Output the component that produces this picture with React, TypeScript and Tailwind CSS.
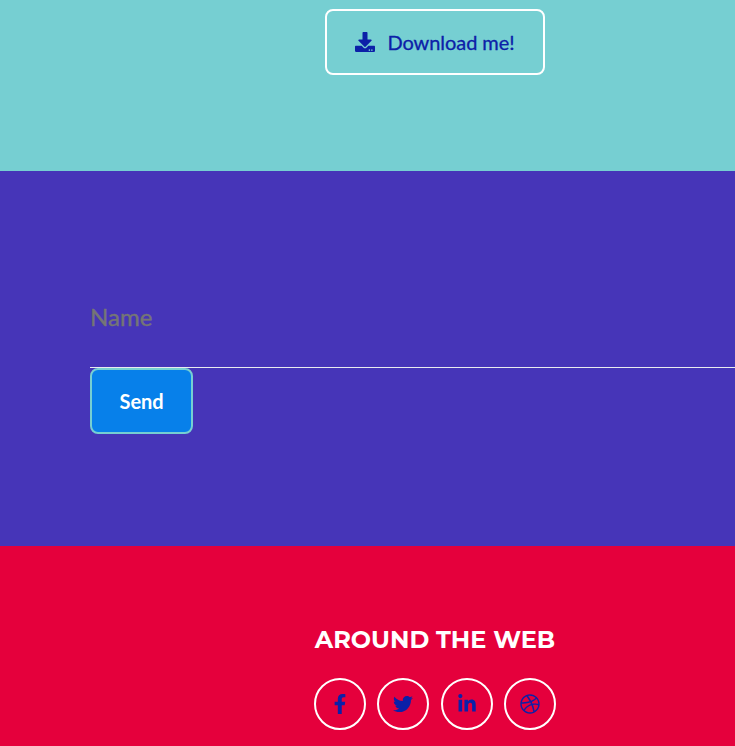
import { FaDownload, FaFacebookF, FaTwitter, FaLinkedinIn, FaDribbble } from "react-icons/fa";

const socials = [
  { name: "Facebook", Icon: FaFacebookF },
  { name: "Twitter", Icon: FaTwitter },
  { name: "LinkedIn", Icon: FaLinkedinIn },
  { name: "Dribbble", Icon: FaDribbble },
];

export default function App() {
  return (
    <div className="h-[746px] w-full overflow-hidden font-['Lato',sans-serif]">
      <section className="flex h-[171px] justify-center bg-[#76cfd2] pl-[135px] pt-[9px]">
        <a className="flex h-[66px] w-[220px] items-center justify-center rounded-lg border-2 border-white text-[20px] text-[#0c20a8]">
          <FaDownload className="mr-3 size-5" />
          <span className="tracking-[-0.06px] [-webkit-text-stroke:0.3px_currentColor]">Download me!</span>
        </a>
      </section>
      <section className="h-[375px] bg-[#4635b8] pl-[90px] pt-[106px]">
        <form>
          <div className="h-[91px] border-b border-[#e9ecef]">
            <input aria-label="Name" placeholder="Name" className="block h-[78px] w-full bg-transparent text-[24px] outline-none placeholder:text-[#757575] [-webkit-text-stroke:0.4px_#757575]" />
          </div>
          <button type="button" className="block h-[66px] w-[103px] rounded-lg border-2 border-[#76cfd2] bg-[#0780ea] text-[20px] font-bold tracking-[-0.1px] text-white">Send</button>
        </form>
      </section>
      <footer className="flex h-[200px] flex-col items-center bg-[#e5003c] pl-[135px] pt-[79px]">
        <h4 className="h-[29px] whitespace-nowrap font-['Montserrat','Open_Sans',sans-serif] text-[24px] font-bold leading-[29px] text-white">AROUND THE WEB</h4>
        <div className="mt-6 flex gap-[11.4px]">
          {socials.map(({ name, Icon }) => (
            <a key={name} aria-label={name} className="flex size-[52px] items-center justify-center rounded-full border-2 border-white text-[20px] text-[#0c20a8]">
              <Icon />
            </a>
          ))}
        </div>
      </footer>
    </div>
  );
}
